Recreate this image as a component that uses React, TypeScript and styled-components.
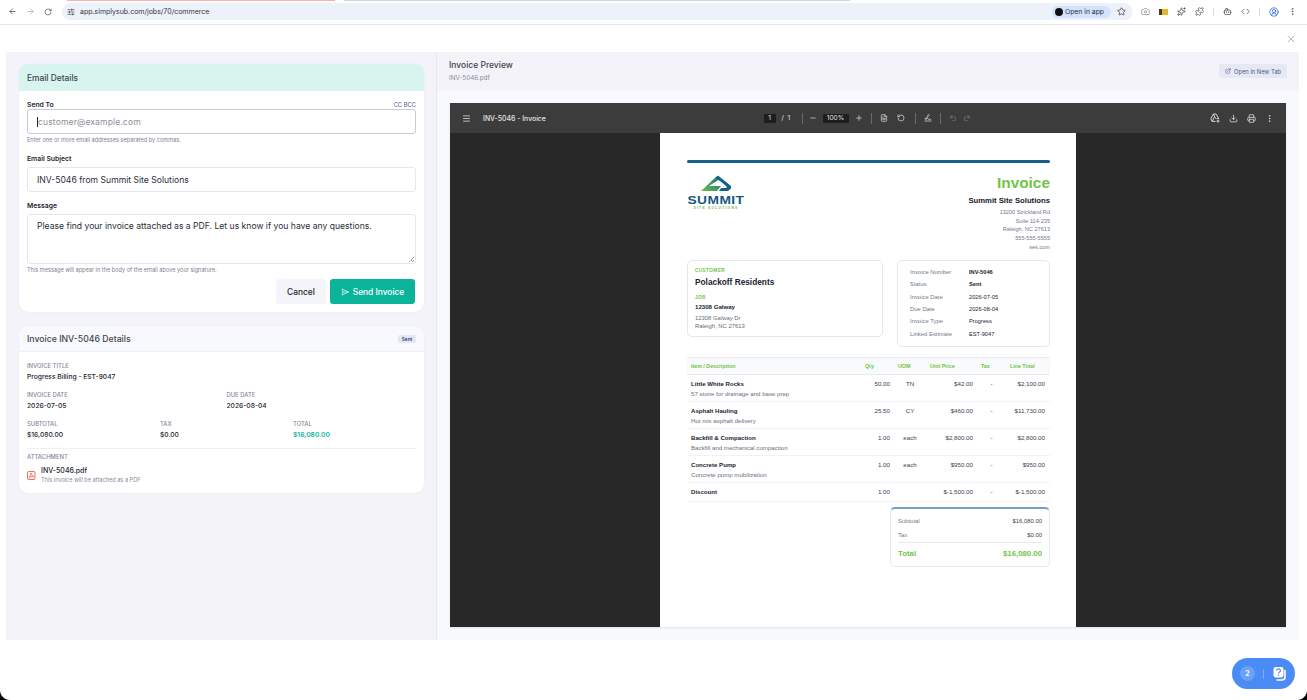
import { Fragment } from "react";
import styled, { createGlobalStyle } from "styled-components";
import {
  ArrowLeft, ArrowRight, RotateCw, SlidersHorizontal, Star, Camera, Puzzle, Code, MoreVertical,
  CircleUserRound, X, SendHorizontal, ExternalLink, Menu, Minus, Plus, FileText, RotateCcw, Undo2, Redo2,
  Download, Printer, Bot, Signature, Sparkles,
} from "lucide-react";

const GlobalStyle = createGlobalStyle`
  html, body { margin: 0; padding: 0; background: #fff; }
  body { font-family: Inter, "Open Sans", sans-serif; color: #1c1c28; overflow: hidden; }
  * { box-sizing: border-box; }
`;

const Screen = styled.div`
  width: 1307px;
  height: 700px;
  display: flex;
  flex-direction: column;
`;

/* browser chrome */
const Browser = styled.header`
  height: 25px;
  border-bottom: 1px solid #e8e8ec;
  display: flex;
  flex-direction: column;
`;
const TabStrip = styled.div`
  height: 2px;
  display: flex;
  padding-left: 67px;
  gap: 9px;
`;
const TabEdge = styled.div<{ $color: string; $w: number }>`
  width: ${p => p.$w}px;
  height: 1px;
  background: ${p => p.$color};
`;
const AddressRow = styled.div`
  flex: 1;
  display: flex;
  align-items: center;
  padding: 0 0 3px 8px;
  color: #4a4d55;
`;
const NavIcons = styled.div`
  display: flex;
  gap: 9px;
  width: 54px;
  align-items: center;
`;
const UrlPill = styled.div`
  width: 1071px;
  height: 17px;
  border-radius: 9px;
  background: #edf2fa;
  display: flex;
  align-items: center;
  padding: 0 7px 0 5px;
  font-size: 7px;
  color: #33363c;
`;
const UrlText = styled.span`
  margin-left: 5px;
  flex: 1;
`;
const OpenInApp = styled.div`
  height: 12px;
  width: 59px;
  border-radius: 6px;
  background: #d3e3fd;
  display: flex;
  align-items: center;
  gap: 2px;
  padding-left: 3px;
  font-size: 6.8px;
  color: #1d2a44;
  margin-right: 6px;
`;
const AppDot = styled.span`
  width: 8px;
  height: 8px;
  border-radius: 50%;
  background: #111;
`;
const Extensions = styled.div`
  display: flex;
  align-items: center;
  gap: 9px;
  margin-left: 8px;
`;
const YellowExt = styled.span`
  width: 9px;
  height: 6px;
  background: #e5b52b;
  border-left: 3px solid #4a3b10;
`;
const ChromeDivider = styled.span`
  width: 1px;
  height: 8px;
  background: #d5d8de;
`;
const Avatar = styled.span`
  display: flex;
  color: #2f6fe0;
`;

/* modal */
const Modal = styled.main`
  height: 615px;
  padding: 0 8px 0 6px;
  display: flex;
  flex-direction: column;
`;
const CloseRow = styled.div`
  height: 27px;
  display: flex;
  justify-content: flex-end;
  align-items: center;
  padding-right: 2px;
  color: #8b8d94;
`;
const Split = styled.div`
  flex: 1;
  display: flex;
  min-height: 0;
`;
const LeftPane = styled.section`
  width: 431px;
  background: #f3f3f9;
  border-right: 1px solid #e6e6ef;
  padding: 12px 12px 0 13px;
  display: flex;
  flex-direction: column;
  gap: 14px;
`;
const Card = styled.div`
  background: #fff;
  border-radius: 9px;
  overflow: hidden;
  box-shadow: 0 0 1px rgba(40, 40, 80, 0.12);
`;
const EmailHead = styled.div`
  height: 27px;
  background: #d8f4ef;
  display: flex;
  align-items: center;
  padding-left: 8px;
  font-size: 8.4px;
  font-weight: 500;
  color: #3d4450;
`;
const CardBody = styled.div`
  padding: 8px;
`;
const LabelRow = styled.div`
  display: flex;
  justify-content: space-between;
  align-items: center;
  height: 10px;
`;
const FieldLabel = styled.label`
  font-size: 6.8px;
  font-weight: 600;
  color: #1f2430;
`;
const CcLink = styled.span`
  font-size: 5.8px;
  color: #4d5a90;
`;
const TextField = styled.div<{ $active?: boolean; $h: number }>`
  margin-top: ${p => (p.$active ? 0 : 4)}px;
  height: ${p => p.$h}px;
  border: 1px solid ${p => (p.$active ? "#c9cad8" : "#e6e7ee")};
  border-radius: 3px;
  padding: ${p => (p.$h > 30 ? "6px" : "0")} 9px 0;
  display: flex;
  align-items: ${p => (p.$h > 30 ? "flex-start" : "center")};
  font-size: 8.6px;
  color: #2a2e38;
  position: relative;
`;
const Placeholder = styled.span`
  color: #8e909c;
  border-left: 1px solid #222;
  letter-spacing: 0.1px;
`;
const Grip = styled.span`
  position: absolute;
  right: 1px;
  bottom: 1px;
  width: 5px;
  height: 5px;
  background: linear-gradient(135deg, transparent 50%, #9a9aa2 50%, #9a9aa2 60%, transparent 60%, transparent 75%, #9a9aa2 75%, #9a9aa2 85%, transparent 85%);
`;
const Help = styled.div<{ $mb: number }>`
  font-size: 5.6px;
  color: #80828f;
  margin-top: 3px;
  height: 7px;
  line-height: 7px;
  margin-bottom: ${p => p.$mb}px;
`;
const Gap = styled.div<{ $h: number }>`
  height: ${p => p.$h}px;
`;
const Actions = styled.div`
  display: flex;
  justify-content: flex-end;
  gap: 4px;
  margin-top: 5px;
  padding-right: 1px;
`;
const CancelButton = styled.button`
  width: 50px;
  height: 25px;
  border: 0;
  border-radius: 3px;
  background: #f3f5f8;
  font: 500 8.4px Inter, sans-serif;
  color: #1f2430;
`;
const SendButton = styled.button`
  width: 85px;
  height: 25px;
  border: 0;
  border-radius: 3px;
  background: #0bb39a;
  color: #fff;
  font: 500 8.4px Inter, sans-serif;
  display: flex;
  align-items: center;
  justify-content: center;
  gap: 4px;
`;
const DetailsHead = styled.div`
  height: 26px;
  background: #f8f9fc;
  border-bottom: 1px solid #eeeff4;
  display: flex;
  align-items: center;
  justify-content: space-between;
  padding: 0 8px;
  font-size: 8.7px;
  font-weight: 500;
  color: #3d4450;
`;
const Badge = styled.span`
  width: 18px;
  height: 8px;
  border-radius: 2px;
  background: #e4e7f3;
  font-size: 4.8px;
  font-weight: 600;
  line-height: 8px;
  text-align: center;
  color: #33407c;
`;
const DetailsBody = styled.div`
  padding: 9px 8px 8px;
`;
const Cols = styled.div<{ $n: number }>`
  display: grid;
  grid-template-columns: repeat(${p => p.$n}, 1fr);
  column-gap: 10px;
  margin-bottom: 8px;
`;
const MetaLabel = styled.div`
  font-size: 5.9px;
  font-weight: 500;
  color: #85879a;
  height: 9px;
  line-height: 9px;
  margin-bottom: 2px;
`;
const MetaValue = styled.div<{ $accent?: boolean }>`
  font-size: 6.7px;
  font-weight: ${p => (p.$accent ? 600 : 500)};
  color: ${p => (p.$accent ? "#0bb39a" : "#23262f")};
  height: 10px;
  line-height: 10px;
`;
const Rule = styled.div`
  height: 1px;
  background: #eff0f4;
  margin: 8px 0 3px;
`;
const AttachmentRow = styled.div`
  display: flex;
  align-items: center;
  gap: 5px;
  margin-top: 5px;
`;
const FileName = styled.div`
  font-size: 7px;
  font-weight: 500;
  color: #23262f;
  line-height: 10px;
`;
const FileHint = styled.div`
  font-size: 5.6px;
  color: #8a8c98;
  line-height: 9px;
`;

/* preview */
const RightPane = styled.section`
  flex: 1;
  background: #f8f9fc;
  display: flex;
  flex-direction: column;
`;
const PreviewHead = styled.div`
  height: 39px;
  background: #f3f3f9;
  padding: 8px 12px 0 12px;
  display: flex;
  justify-content: space-between;
  align-items: flex-start;
`;
const PreviewTitle = styled.div`
  font-size: 8.5px;
  font-weight: 500;
  color: #3d4450;
  line-height: 11px;
`;
const PreviewFile = styled.div`
  font-size: 6.3px;
  color: #8a8c98;
  line-height: 9px;
  margin-top: 3px;
`;
const NewTabButton = styled.div`
  width: 68px;
  height: 14px;
  margin-top: 4px;
  border-radius: 2px;
  background: #e6e8f3;
  color: #4d5a90;
  font-size: 5.8px;
  display: flex;
  align-items: center;
  justify-content: center;
  gap: 3px;
`;
const Viewer = styled.div`
  margin: 12px 13px 13px;
  flex: 1;
  background: #282828;
  display: flex;
  flex-direction: column;
  box-shadow: 0 1px 2px rgba(0, 0, 0, 0.1);
  min-height: 0;
`;
const ViewerBar = styled.div`
  height: 30px;
  background: #3c3c3c;
  display: grid;
  grid-template-columns: 1fr auto 1fr;
  align-items: center;
  padding: 0 12px;
  color: #e4e4e4;
`;
const BarLeft = styled.div`
  display: flex;
  align-items: center;
  gap: 12px;
  font-size: 6.9px;
  font-weight: 500;
`;
const BarCenter = styled.div`
  display: flex;
  align-items: center;
  font-size: 6.6px;
  gap: 6px;
  margin-right: 2px;
`;
const PageBox = styled.span<{ $w: number }>`
  width: ${p => p.$w}px;
  height: 9px;
  background: #1e1e1e;
  text-align: center;
  line-height: 9px;
`;
const PageCount = styled.span`
  width: 12px;
`;
const BarRule = styled.span`
  width: 1px;
  height: 11px;
  background: #6a6a6a;
  margin: 0 2px;
`;
const Nudge = styled.span<{ $ml?: number; $mr?: number }>`
  display: flex;
  margin-left: ${p => p.$ml || 0}px;
  margin-right: ${p => p.$mr || 0}px;
`;
const BarRight = styled.div`
  display: flex;
  justify-content: flex-end;
  gap: 9px;
  align-items: center;
`;
const Dim = styled.span`
  display: flex;
  color: #7c7c7c;
`;
const ViewerBody = styled.div`
  flex: 1;
  display: flex;
  justify-content: center;
  min-height: 0;
`;
const Sheet = styled.article`
  width: 416px;
  background: #fff;
  padding: 27px 26px 0 27px;
  font-family: "Liberation Sans", Arial, sans-serif;
  color: #1b2430;
`;
const TopRule = styled.div`
  height: 3px;
  border-radius: 2px;
  background: #1a5f8a;
`;
const SheetHead = styled.div`
  display: flex;
  justify-content: space-between;
  margin-top: 12px;
  height: 85px;
`;
const LogoBox = styled.div`
  width: 58px;
  display: flex;
  flex-direction: column;
  align-items: center;
`;
const LogoWord = styled.div`
  font-size: 10.6px;
  line-height: 10px;
  font-weight: 700;
  letter-spacing: 0.35px;
  color: #15577f;
  margin-top: 3px;
  transform: scaleX(1.3);
`;
const LogoSub = styled.div`
  font-size: 3.3px;
  line-height: 6px;
  font-weight: 700;
  letter-spacing: 1.25px;
  color: #66bb45;
`;
const Company = styled.div`
  text-align: right;
`;
const DocTitle = styled.div`
  font-size: 15.4px;
  line-height: 15px;
  font-weight: 700;
  color: #72c544;
`;
const CompanyName = styled.div`
  font-size: 7.7px;
  line-height: 10px;
  font-weight: 700;
  margin: 6px 0 2px;
  color: #14202c;
`;
const AddressLine = styled.div`
  font-size: 5.6px;
  line-height: 8.7px;
  color: #747a88;
`;
const Boxes = styled.div`
  display: flex;
  justify-content: space-between;
  align-items: flex-start;
`;
const InfoBox = styled.div<{ $w: number; $h: number }>`
  width: ${p => p.$w}px;
  height: ${p => p.$h}px;
  border: 1px solid #e4e6ef;
  border-radius: 5px;
`;
const CustomerBox = styled(InfoBox)`
  padding: 6px 7px;
`;
const TinyGreen = styled.div`
  font-size: 4.7px;
  line-height: 7px;
  font-weight: 700;
  letter-spacing: 0.4px;
  color: #72c544;
`;
const CustomerName = styled.div`
  font-size: 8.3px;
  line-height: 11px;
  font-weight: 700;
  margin: 3px 0 6px;
`;
const JobName = styled.div`
  font-size: 6.1px;
  line-height: 8px;
  font-weight: 700;
  margin: 2px 0 3px;
`;
const JobLine = styled.div`
  font-size: 5.9px;
  line-height: 8.4px;
  color: #656b7a;
`;
const FactsBox = styled(InfoBox)`
  padding: 5px 12px;
  display: grid;
  grid-template-columns: 59px 1fr;
  grid-auto-rows: 12.3px;
  align-items: center;
`;
const FactKey = styled.span`
  font-size: 5.9px;
  color: #747a88;
`;
const FactValue = styled.span<{ $bold?: boolean }>`
  font-size: 5.7px;
  font-weight: ${p => (p.$bold ? 700 : 400)};
  color: #1b2430;
`;
const LineGrid = styled.div`
  display: grid;
  grid-template-columns: 174px 33px 32px 51px 29px 35px;
  padding: 0 5px 0 4px;
`;
const LineHead = styled(LineGrid)`
  margin-top: 10px;
  height: 18px;
  background: #f8fafc;
  border-top: 1px solid #e8eaf1;
  border-bottom: 1px solid #e8eaf1;
  align-items: center;
  font-size: 5.3px;
  font-weight: 700;
  color: #72c544;
`;
const LineRow = styled(LineGrid)<{ $short: boolean }>`
  height: ${p => (p.$short ? 19 : 27)}px;
  padding-top: 5px;
  border-bottom: 1px solid #f1f2f6;
  font-size: 6.2px;
  line-height: 8px;
  color: #3c4352;
`;
const ItemName = styled.div`
  font-size: 6.1px;
  font-weight: 700;
  color: #1b2430;
`;
const ItemDesc = styled.div`
  font-size: 6.1px;
  line-height: 11px;
  color: #6a7080;
`;
const Cell = styled.div<{ $align: string; $last?: boolean }>`
  text-align: ${p => p.$align};
  padding-right: ${p => (p.$last ? 0 : 8)}px;
  white-space: nowrap;
`;
const TotalsWrap = styled.div`
  display: flex;
  justify-content: flex-end;
  margin-top: 5px;
`;
const TotalsBox = styled.div`
  width: 160px;
  height: 60px;
  border: 1px solid #e6e8f0;
  border-top: 2px solid #6da3c0;
  border-radius: 5px;
  padding: 5px 7px 0;
`;
const TotalLine = styled.div`
  display: flex;
  justify-content: space-between;
  height: 14px;
  align-items: center;
  font-size: 5.9px;
  color: #3c4352;
`;
const TotalKey = styled.span`
  color: #747a88;
`;
const GrandLine = styled.div`
  display: flex;
  justify-content: space-between;
  border-top: 1px solid #e8e9f0;
  padding-top: 5px;
  font-size: 7.8px;
  line-height: 11px;
  font-weight: 700;
  color: #72c544;
`;

/* floating stuff */
const HelpWidget = styled.div`
  position: fixed;
  right: 12px;
  bottom: 11px;
  width: 63px;
  height: 31px;
  border-radius: 16px;
  background: #4b8bf5;
  color: #fff;
  display: flex;
  align-items: center;
  padding-left: 8px;
`;
const Count = styled.span`
  width: 15px;
  height: 15px;
  border-radius: 50%;
  background: #6ca1f8;
  font-size: 7px;
  font-weight: 600;
  text-align: center;
  line-height: 15px;
`;
const WidgetRule = styled.span`
  width: 1px;
  height: 10px;
  background: #7eaaf6;
  margin: 0 8px;
`;
const WindowCorner = styled.div<{ $side: "left" | "right" }>`
  position: fixed;
  bottom: 0;
  ${p => p.$side}: 0;
  width: 10px;
  height: 10px;
  background: radial-gradient(circle at ${p => (p.$side === "left" ? "100% 0" : "0 0")}, transparent 9.5px, #000 10.5px);
`;

const customer = ["12308 Galway Dr", "Raleigh, NC 27613"];
const address = ["13200 Strickland Rd", "Suite 114-235", "Raleigh, NC 27613", "555-555-5555", "ses.com"];
const facts = [
  ["Invoice Number", "INV-5046", true],
  ["Status", "Sent", true],
  ["Invoice Date", "2026-07-05"],
  ["Due Date", "2026-08-04"],
  ["Invoice Type", "Progress"],
  ["Linked Estimate", "EST-9047"],
] as [string, string, boolean?][];
const lines = [
  { name: "Little White Rocks", desc: "57 stone for drainage and base prep", qty: "50.00", uom: "TN", price: "$42.00", total: "$2,100.00" },
  { name: "Asphalt Hauling", desc: "Hot mix asphalt delivery", qty: "25.50", uom: "CY", price: "$460.00", total: "$11,730.00" },
  { name: "Backfill & Compaction", desc: "Backfill and mechanical compaction", qty: "1.00", uom: "each", price: "$2,800.00", total: "$2,800.00" },
  { name: "Concrete Pump", desc: "Concrete pump mobilization", qty: "1.00", uom: "each", price: "$950.00", total: "$950.00" },
  { name: "Discount", desc: "", qty: "1.00", uom: "", price: "$-1,500.00", total: "$-1,500.00" },
];

const SummitMark = () => (
  <svg width="33" height="17" viewBox="0 0 33 17">
    <defs>
      <linearGradient id="peak" x1="0" y1="1" x2="1" y2="0">
        <stop offset="0" stopColor="#6cc04a" />
        <stop offset="1" stopColor="#1a6d84" />
      </linearGradient>
    </defs>
    <path d="M1 16 L17 1 L20 4 L9 11 H21 L17 16 Z" fill="url(#peak)" />
    <path d="M18 0.5 L31 11 V13.5 L28 16 H19 L21 13 H26 L27 12 L25 10 L16 3 Z" fill="#14608c" />
  </svg>
);

const PdfBadge = () => (
  <svg width="9" height="9" viewBox="0 0 9 9" fill="none" stroke="#f0634a">
    <rect x="0.5" y="0.5" width="7.5" height="8" rx="1" fill="#fff1ee" strokeWidth="0.9" />
    <path d="M4 2 C4.2 4.4 3 6 1.8 6.8 C3 5.6 5.4 5 7 5.5 C5.6 5.4 4.4 3.8 4 2 Z" strokeWidth="0.7" />
  </svg>
);

const DriveIcon = () => (
  <svg width="10" height="10" viewBox="0 0 10 10" fill="none" stroke="currentColor" strokeWidth="0.9">
    <path d="M3.4 1 H6 L8.8 5.6 H6.6 M3.4 1 L0.8 5.8 L2.2 8.4 H5.6 M3.4 1 L5.6 5.6 M2.2 8.4 L4.4 4" />
    <path d="M8 6.6 V9.6 M6.5 8.1 H9.5" />
  </svg>
);

const App = () => (
  <Screen>
    <GlobalStyle />
    <Browser>
      <TabStrip>
        <TabEdge $color="#f6b4ab" $w={268} />
        <TabEdge $color="#d6d6da" $w={506} />
      </TabStrip>
      <AddressRow>
        <NavIcons>
          <ArrowLeft size={9} />
          <ArrowRight size={9} color="#a9acb3" />
          <RotateCw size={8} />
        </NavIcons>
        <UrlPill>
          <SlidersHorizontal size={8} />
          <UrlText>app.simplysub.com/jobs/70/commerce</UrlText>
          <OpenInApp><AppDot />Open in app</OpenInApp>
          <Star size={9} />
        </UrlPill>
        <Extensions>
          <Camera size={9} color="#8a8d94" />
          <YellowExt />
          <Sparkles size={9} />
          <Puzzle size={9} />
          <ChromeDivider />
          <Bot size={9} />
          <Code size={9} />
          <ChromeDivider />
          <Avatar><CircleUserRound size={10} /></Avatar>
          <MoreVertical size={9} />
        </Extensions>
      </AddressRow>
    </Browser>

    <Modal>
      <CloseRow><X size={12} strokeWidth={1.25} /></CloseRow>
      <Split>
        <LeftPane>
          <Card>
            <EmailHead>Email Details</EmailHead>
            <CardBody>
              <LabelRow><FieldLabel>Send To</FieldLabel><CcLink>CC BCC</CcLink></LabelRow>
              <TextField $active $h={25}><Placeholder>customer@example.com</Placeholder></TextField>
              <Help $mb={9}>Enter one or more email addresses separated by commas.</Help>
              <LabelRow><FieldLabel>Email Subject</FieldLabel></LabelRow>
              <TextField $h={25}>INV-5046 from Summit Site Solutions</TextField>
              <Gap $h={8} />
              <LabelRow><FieldLabel>Message</FieldLabel></LabelRow>
              <TextField $h={50}>
                Please find your invoice attached as a PDF. Let us know if you have any questions.
                <Grip />
              </TextField>
              <Help $mb={0}>This message will appear in the body of the email above your signature.</Help>
              <Actions>
                <CancelButton>Cancel</CancelButton>
                <SendButton><SendHorizontal size={8} />Send Invoice</SendButton>
              </Actions>
            </CardBody>
          </Card>

          <Card>
            <DetailsHead>Invoice INV-5046 Details<Badge>Sent</Badge></DetailsHead>
            <DetailsBody>
              <Cols $n={1}>
                <div><MetaLabel>INVOICE TITLE</MetaLabel><MetaValue>Progress Billing - EST-9047</MetaValue></div>
              </Cols>
              <Cols $n={2}>
                <div><MetaLabel>INVOICE DATE</MetaLabel><MetaValue>2026-07-05</MetaValue></div>
                <div><MetaLabel>DUE DATE</MetaLabel><MetaValue>2026-08-04</MetaValue></div>
              </Cols>
              <Cols $n={3}>
                <div><MetaLabel>SUBTOTAL</MetaLabel><MetaValue>$16,080.00</MetaValue></div>
                <div><MetaLabel>TAX</MetaLabel><MetaValue>$0.00</MetaValue></div>
                <div><MetaLabel>TOTAL</MetaLabel><MetaValue $accent>$16,080.00</MetaValue></div>
              </Cols>
              <Rule />
              <MetaLabel>ATTACHMENT</MetaLabel>
              <AttachmentRow>
                <PdfBadge />
                <div>
                  <FileName>INV-5046.pdf</FileName>
                  <FileHint>This invoice will be attached as a PDF</FileHint>
                </div>
              </AttachmentRow>
            </DetailsBody>
          </Card>
        </LeftPane>

        <RightPane>
          <PreviewHead>
            <div>
              <PreviewTitle>Invoice Preview</PreviewTitle>
              <PreviewFile>INV-5046.pdf</PreviewFile>
            </div>
            <NewTabButton><ExternalLink size={6} />Open in New Tab</NewTabButton>
          </PreviewHead>
          <Viewer>
            <ViewerBar>
              <BarLeft><Menu size={9} />INV-5046 - Invoice</BarLeft>
              <BarCenter>
                <PageBox $w={12}>1</PageBox>
                <PageCount>/&nbsp;&nbsp;1</PageCount>
                <BarRule />
                <Nudge $ml={-2}><Minus size={8} /></Nudge>
                <PageBox $w={26}>100%</PageBox>
                <Plus size={8} />
                <BarRule />
                <Nudge $mr={3}><FileText size={8} /></Nudge>
                <Nudge $mr={2}><RotateCcw size={8} /></Nudge>
                <BarRule />
                <Signature size={8} />
                <BarRule />
                <Dim><Undo2 size={8} /></Dim>
                <Dim><Redo2 size={8} /></Dim>
              </BarCenter>
              <BarRight>
                <DriveIcon />
                <Download size={9} />
                <Printer size={9} />
                <MoreVertical size={9} />
              </BarRight>
            </ViewerBar>
            <ViewerBody>
              <Sheet>
                <TopRule />
                <SheetHead>
                  <LogoBox>
                    <SummitMark />
                    <LogoWord>SUMMIT</LogoWord>
                    <LogoSub>SITE SOLUTIONS</LogoSub>
                  </LogoBox>
                  <Company>
                    <DocTitle>Invoice</DocTitle>
                    <CompanyName>Summit Site Solutions</CompanyName>
                    {address.map(a => <AddressLine key={a}>{a}</AddressLine>)}
                  </Company>
                </SheetHead>
                <Boxes>
                  <CustomerBox $w={196} $h={77}>
                    <TinyGreen>CUSTOMER</TinyGreen>
                    <CustomerName>Polackoff Residents</CustomerName>
                    <TinyGreen>JOB</TinyGreen>
                    <JobName>12308 Galway</JobName>
                    {customer.map(c => <JobLine key={c}>{c}</JobLine>)}
                  </CustomerBox>
                  <FactsBox $w={153} $h={87}>
                    {facts.map(([k, v, bold]) => (
                      <Fragment key={k}>
                        <FactKey>{k}</FactKey>
                        <FactValue $bold={bold}>{v}</FactValue>
                      </Fragment>
                    ))}
                  </FactsBox>
                </Boxes>
                <LineHead>
                  <span>Item / Description</span><span>Qty</span><span>UOM</span><span>Unit Price</span><span>Tax</span><span>Line Total</span>
                </LineHead>
                {lines.map(l => (
                  <LineRow key={l.name} $short={!l.desc}>
                    <div><ItemName>{l.name}</ItemName><ItemDesc>{l.desc}</ItemDesc></div>
                    <Cell $align="right">{l.qty}</Cell>
                    <Cell $align="center">{l.uom}</Cell>
                    <Cell $align="right">{l.price}</Cell>
                    <Cell $align="center">-</Cell>
                    <Cell $align="right" $last>{l.total}</Cell>
                  </LineRow>
                ))}
                <TotalsWrap>
                  <TotalsBox>
                    <TotalLine><TotalKey>Subtotal</TotalKey><span>$16,080.00</span></TotalLine>
                    <TotalLine><TotalKey>Tax</TotalKey><span>$0.00</span></TotalLine>
                    <GrandLine><span>Total</span><span>$16,080.00</span></GrandLine>
                  </TotalsBox>
                </TotalsWrap>
              </Sheet>
            </ViewerBody>
          </Viewer>
        </RightPane>
      </Split>
    </Modal>

    <HelpWidget>
      <Count>2</Count>
      <WidgetRule />
      <svg width="16" height="16" viewBox="0 0 16 16">
        <path d="M13 4.5 V11 a3 3 0 0 1 -3 3 H5" fill="none" stroke="#fff" strokeWidth="1.6" strokeLinecap="round" />
        <rect x="1.5" y="1" width="10" height="10.5" rx="2.2" fill="#fff" />
        <path d="M4.8 4.6 a1.8 1.8 0 1 1 2.6 1.6 c-.6.3-.9.6-.9 1.2" fill="none" stroke="#4b8bf5" strokeWidth="1.2" />
        <circle cx="6.5" cy="9.2" r=".7" fill="#4b8bf5" />
      </svg>
    </HelpWidget>
    <WindowCorner $side="left" />
    <WindowCorner $side="right" />
  </Screen>
);

export default App;
